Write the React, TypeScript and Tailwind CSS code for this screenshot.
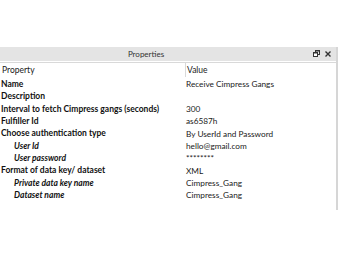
import React from "react"

type Row = { label: string; value: string; child?: boolean }

const rows: Row[] = [
  { label: "Name", value: "Receive Cimpress Gangs" },
  { label: "Description", value: "" },
  { label: "Interval to fetch Cimpress gangs (seconds)", value: "300" },
  { label: "Fulfiller Id", value: "as6587h" },
  { label: "Choose authentication type", value: "By UserId and Password" },
  { label: "User Id", value: "hello@gmail.com", child: true },
  { label: "User password", value: "********", child: true },
  { label: "Format of data key/ dataset", value: "XML" },
  { label: "Private data key name", value: "Cimpress_Gang", child: true },
  { label: "Dataset name", value: "Cimpress_Gang", child: true },
]

export default function App() {
  return (
    <div className="w-[340px] h-[260px] bg-white pt-[47px] font-['Lato',sans-serif] text-[#1a1a1a]">
      <div className="w-[338px] h-[163px] border-r-2 border-[#d6d6d6]">
        {/* Title bar */}
        <div className="h-[14px] bg-[#e4e4e4] flex items-center relative">
          <span className="w-[292px] text-center text-[8px] leading-none text-[#333]">Properties</span>
          <div className="absolute right-[5px] top-[3px] flex items-center gap-[5px]">
            <svg width="7" height="7" viewBox="0 0 7 7" className="text-[#333]">
              <rect x="2.5" y="0.5" width="4" height="4" fill="none" stroke="currentColor" />
              <rect x="0.5" y="2.5" width="4" height="4" fill="white" stroke="currentColor" />
              <rect x="2.5" y="0.5" width="4" height="1" fill="currentColor" />
              <rect x="0.5" y="2.5" width="4" height="1" fill="currentColor" />
            </svg>
            <svg width="6" height="6" viewBox="0 0 6 6" className="text-[#333]">
              <path d="M0.5 0.5 L5.5 5.5 M5.5 0.5 L0.5 5.5" stroke="currentColor" strokeWidth="1.4" />
            </svg>
          </div>
        </div>

        {/* Column headers */}
        <div className="mt-[1px] border-t border-[#d9d9d9] grid grid-cols-[185px_1fr] h-[15px] text-[8.5px] items-center">
          <div className="pl-[2px]">Property</div>
          <div className="h-full border-l border-[#d9d9d9] pl-[1px] flex items-center">Value</div>
        </div>

        {/* Rows */}
        <div className="pt-[1px]">
          {rows.map((r) => (
            <div key={r.label} className="grid grid-cols-[185px_1fr] h-[12.35px] items-center">
              <div
                className={
                  r.child
                    ? "pl-[14px] text-[8.5px] font-bold italic text-[#111] whitespace-nowrap"
                    : "pl-[1px] text-[8.5px] font-bold text-[#111] whitespace-nowrap"
                }
              >
                {r.label}
              </div>
              <div className="pl-[1px] text-[8.25px] whitespace-nowrap">{r.value}</div>
            </div>
          ))}
        </div>
      </div>
    </div>
  )
}
